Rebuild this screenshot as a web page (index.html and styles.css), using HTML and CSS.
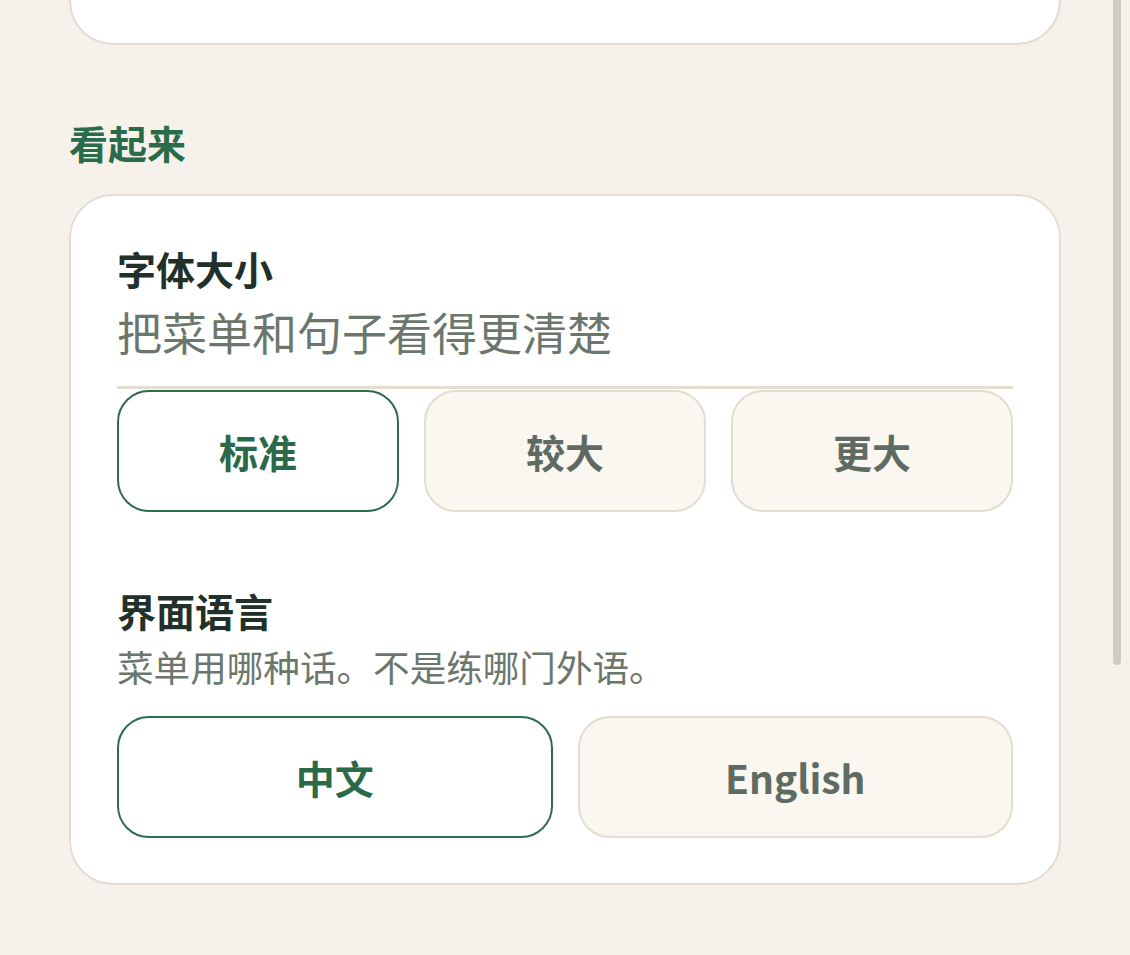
FILE: index.html
```html
<!DOCTYPE html>
<html lang="zh-CN">
<head>
<meta charset="utf-8">
<title>设置</title>
<link rel="stylesheet" href="styles.css">
</head>
<body>
<div class="page">
  <div class="card card-cut"></div>

  <h2 class="section-title">看起来</h2>

  <div class="card settings">
    <div class="setting">
      <div class="setting-title">字体大小</div>
      <div class="setting-preview">把菜单和句子看得更清楚</div>
      <div class="options three">
        <button class="option selected">标准</button>
        <button class="option">较大</button>
        <button class="option">更大</button>
      </div>
    </div>

    <div class="setting setting-lang">
      <div class="setting-title">界面语言</div>
      <div class="setting-desc">菜单用哪种话。不是练哪门外语。</div>
      <div class="options two">
        <button class="option selected">中文</button>
        <button class="option">English</button>
      </div>
    </div>
  </div>
</div>
<div class="scroll-thumb"></div>
</body>
</html>
```

FILE: styles.css
```css
* {
  box-sizing: border-box;
}

html, body {
  margin: 0;
  padding: 0;
}

body {
  background: #f6f2eb;
  font-family: "Noto Sans CJK SC", "Noto Sans", sans-serif;
  color: #22302a;
  overflow: hidden;
}

.page {
  padding: 0 69px 70px;
  display: flex;
  flex-direction: column;
}

.card {
  background: #ffffff;
  border: 2px solid #e3dcd1;
  border-radius: 44px;
}

.card-cut {
  height: 45px;
  border-top: none;
  border-radius: 0 0 44px 44px;
}

.section-title {
  margin: 71px 0 26px;
  font-size: 39px;
  line-height: 52px;
  font-weight: 700;
  color: #2a6b4a;
}

.settings {
  padding: 46px 46px 45px;
  display: flex;
  flex-direction: column;
}

.setting {
  display: flex;
  flex-direction: column;
}

.setting-lang {
  margin-top: 72px;
}

.setting-title {
  font-size: 39px;
  line-height: 52px;
  font-weight: 700;
  color: #22302a;
}

.setting-preview {
  margin-top: 8px;
  font-size: 45px;
  line-height: 60px;
  color: #6b776c;
  padding-bottom: 24px;
  border-bottom: 3px solid #e4ddd2;
}

.setting-desc {
  margin-top: 7px;
  font-size: 36.6px;
  line-height: 48px;
  color: #6b776c;
}

.options {
  display: grid;
  gap: 25px;
}

.options.three {
  grid-template-columns: repeat(3, 1fr);
  margin-top: 1px;
}

.options.two {
  grid-template-columns: repeat(2, 1fr);
  margin-top: 25px;
}

.option {
  height: 122px;
  border-radius: 32px;
  border: 2px solid #e3dcd1;
  background: #faf7f1;
  font-family: "Noto Sans CJK SC", "Noto Sans", sans-serif;
  font-size: 39px;
  font-weight: 700;
  color: #5f6b62;
  padding: 0;
  cursor: pointer;
}

.option.selected {
  background: #ffffff;
  border: 2.5px solid #2f6b4f;
  color: #2a6a4b;
}

.scroll-thumb {
  position: fixed;
  top: 0;
  right: 9px;
  width: 8px;
  height: 665px;
  background: #cfcbc4;
  border-radius: 0 0 4px 4px;
}
```
